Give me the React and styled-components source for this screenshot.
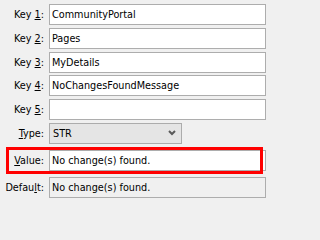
import React from "react";
import styled, { createGlobalStyle } from "styled-components";

const Global = createGlobalStyle`
  html, body {
    margin: 0;
    padding: 0;
    background: #f0f0f0;
  }
  body {
    font-family: "DejaVu Sans Condensed", Tahoma, "DejaVu Sans", sans-serif;
    font-size: 10.75px;
    color: #000;
  }
`;

const Form = styled.div`
  display: flex;
  flex-direction: column;
  gap: 2.8px;
  padding-top: 4px;
  width: 266px;
  height: 202px;
  box-sizing: border-box;
  overflow: hidden;
`;

const Row = styled.div`
  display: grid;
  grid-template-columns: 44px 217px;
  column-gap: 5px;
  align-items: center;
  height: 21px;
`;

const HighlightRow = styled(Row)`
  position: relative;
  height: 27px;
  box-sizing: border-box;
  padding: 3px 0;

  &::after {
    content: "";
    position: absolute;
    left: 6px;
    right: 3px;
    top: 0;
    bottom: 0;
    border: 3px solid #ff0000;
    pointer-events: none;
  }
`;

const Label = styled.label`
  text-align: right;
  white-space: nowrap;
  line-height: 21px;
`;

const Key = styled.u`
  text-decoration: underline;
  text-underline-offset: 1px;
`;

const TextBox = styled.input`
  font: inherit;
  color: #000;
  height: 21px;
  width: 100%;
  margin: 0;
  box-sizing: border-box;
  border: 1px solid #adadad;
  padding: 0 2px;
  outline: none;
  background: ${(p) => (p.$disabled ? "#f0f0f0" : "#ffffff")};
`;

const Combo = styled.div`
  width: 133px;
  height: 21px;
  box-sizing: border-box;
  border: 1px solid #acacac;
  background: #e5e5e5;
  display: flex;
  align-items: center;
  justify-content: space-between;
  padding: 0 5px 0 3px;
`;

const Chevron = () => (
  <svg width="8" height="6" viewBox="0 0 8 6">
    <polyline
      points="1,1 4,4 7,1"
      fill="none"
      stroke="#5a5a5a"
      strokeWidth="2"
    />
  </svg>
);

const keys = ["CommunityPortal", "Pages", "MyDetails", "NoChangesFoundMessage", ""];

export default function App() {
  return (
    <>
      <Global />
      <Form>
        {keys.map((v, i) => (
          <Row key={i}>
            <Label>
              Key <Key>{i + 1}</Key>:
            </Label>
            <TextBox readOnly defaultValue={v} />
          </Row>
        ))}
        <Row>
          <Label>
            <Key>T</Key>ype:
          </Label>
          <Combo role="combobox">
            <span>STR</span>
            <Chevron />
          </Combo>
        </Row>
        <HighlightRow>
          <Label>
            <Key>V</Key>alue:
          </Label>
          <TextBox readOnly defaultValue="No change(s) found." />
        </HighlightRow>
        <Row>
          <Label>
            Defau<Key>l</Key>t:
          </Label>
          <TextBox readOnly $disabled defaultValue="No change(s) found." />
        </Row>
      </Form>
    </>
  );
}
